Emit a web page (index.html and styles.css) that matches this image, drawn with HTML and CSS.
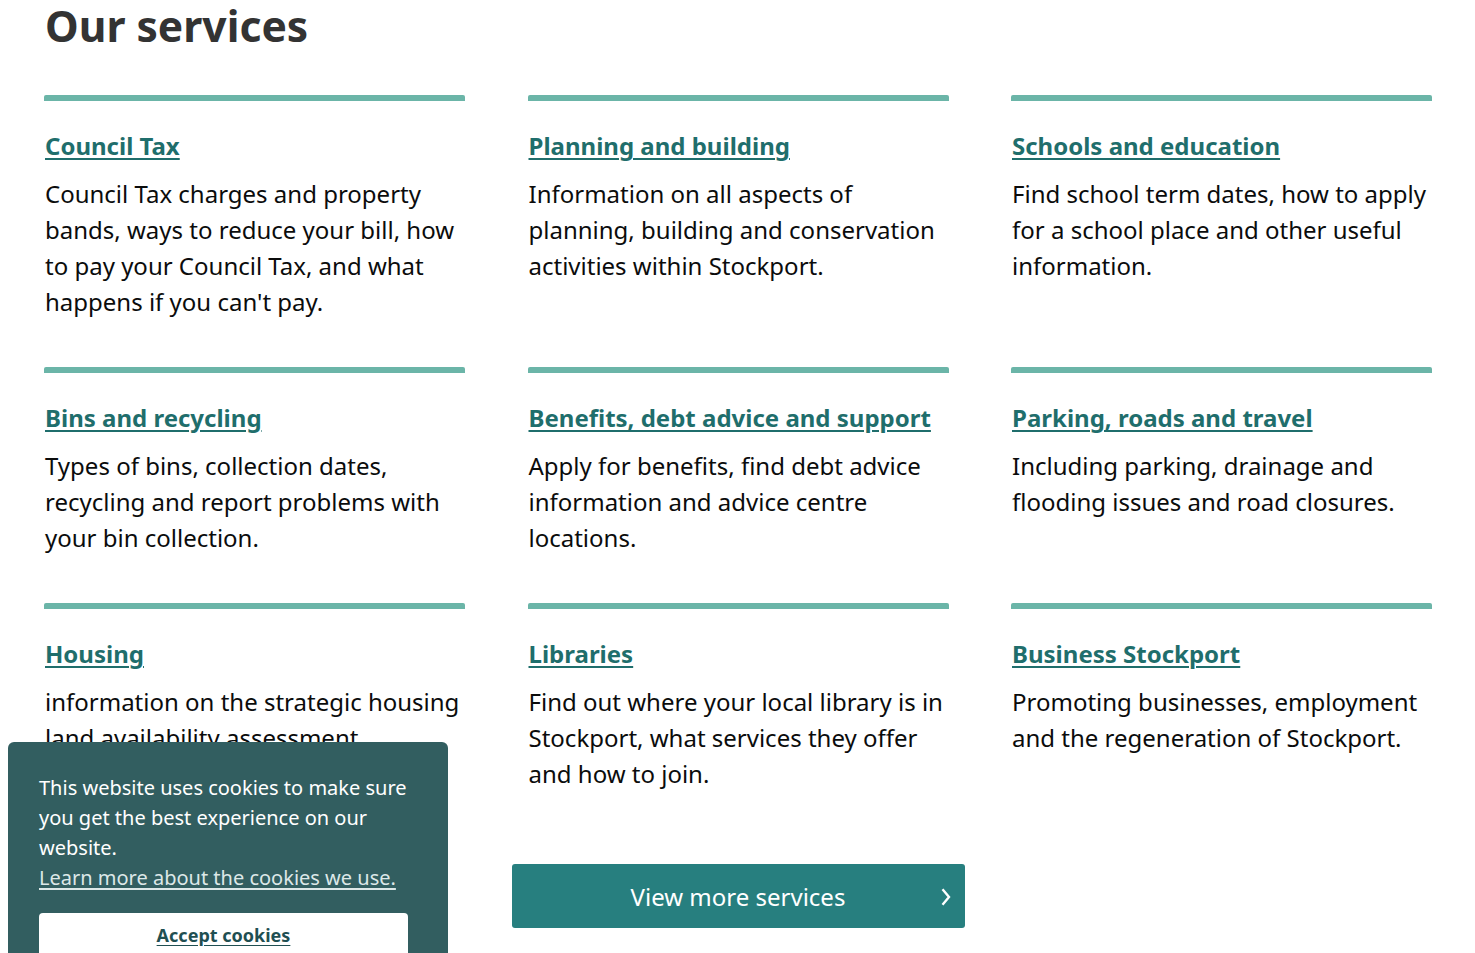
FILE: index.html
```html
<!DOCTYPE html>
<html lang="en">
<head>
<meta charset="utf-8">
<title>Our services</title>
<link rel="stylesheet" href="styles.css">
</head>
<body>
<main class="page">
  <h1 class="title">Our services</h1>
  <div class="services">
    <div class="card">
      <a class="card-link" href="#">Council Tax</a>
      <p class="card-text">Council Tax charges and property bands, ways to reduce your bill, how to pay your Council Tax, and what happens if you can't pay.</p>
    </div>
    <div class="card">
      <a class="card-link" href="#">Planning and building</a>
      <p class="card-text">Information on all aspects of planning, building and conservation activities within Stockport.</p>
    </div>
    <div class="card">
      <a class="card-link" href="#">Schools and education</a>
      <p class="card-text">Find school term dates, how to apply for a school place and other useful information.</p>
    </div>
    <div class="card">
      <a class="card-link" href="#">Bins and recycling</a>
      <p class="card-text">Types of bins, collection dates, recycling and report problems with your bin collection.</p>
    </div>
    <div class="card">
      <a class="card-link" href="#">Benefits, debt advice and support</a>
      <p class="card-text">Apply for benefits, find debt advice information and advice centre locations.</p>
    </div>
    <div class="card">
      <a class="card-link" href="#">Parking, roads and travel</a>
      <p class="card-text">Including parking, drainage and flooding issues and road closures.</p>
    </div>
    <div class="card">
      <a class="card-link" href="#">Housing</a>
      <p class="card-text">information on the strategic housing land availability assessment</p>
    </div>
    <div class="card">
      <a class="card-link" href="#">Libraries</a>
      <p class="card-text">Find out where your local library is in Stockport, what services they offer and how to join.</p>
    </div>
    <div class="card">
      <a class="card-link" href="#">Business Stockport</a>
      <p class="card-text">Promoting businesses, employment and the regeneration of Stockport.</p>
    </div>
  </div>
  <div class="more-row">
    <a class="more-btn" href="#">
      <span class="more-label">View more services</span>
      <svg class="more-chevron" width="10" height="18" viewBox="0 0 10 18" aria-hidden="true"><path d="M1.5 1.2 L8 9 L1.5 16.8" fill="none" stroke="#ffffff" stroke-width="2.4"/></svg>
    </a>
  </div>
</main>
<div class="cookie">
  <p class="cookie-text">This website uses cookies to make sure you get the best experience on our website.</p>
  <a class="cookie-link" href="#">Learn more about the cookies we use.</a>
  <button class="cookie-btn" type="button">Accept cookies</button>
</div>
</body>
</html>
```

FILE: styles.css
```css
html, body {
  margin: 0;
  padding: 0;
  background: #ffffff;
}

body {
  font-family: "Noto Sans", "Open Sans", sans-serif;
  color: #0b0c0c;
}

.page {
  width: 1388px;
  padding-left: 44px;
}

.title {
  margin: -3px 0 0 1px;
  font-size: 42.6px;
  line-height: 56px;
  font-weight: 700;
  color: #333333;
}

.services {
  margin-top: 42px;
  display: grid;
  grid-template-columns: repeat(3, 1fr);
  column-gap: 62.5px;
}

.card {
  border-top: 6px solid #6bb5a8;
  border-radius: 2px 2px 0 0;
  padding: 27px 0 47px 1px;
}

.card-link {
  display: inline-block;
  font-size: 24px;
  line-height: 36px;
  font-weight: 700;
  color: #1f6e6c;
  text-decoration: underline;
  text-decoration-thickness: 2px;
  text-underline-offset: 3px;
}

.card-text {
  margin: 12px 0 0;
  font-size: 24px;
  line-height: 36px;
}

.more-row {
  display: grid;
  grid-template-columns: repeat(3, 1fr);
  column-gap: 62.5px;
  margin-top: 25px;
}

.more-btn {
  grid-column: 2;
  margin: 0 -16px;
  height: 64px;
  display: flex;
  align-items: center;
  justify-content: center;
  position: relative;
  background: #277f7f;
  border-radius: 3px;
  color: #ffffff;
  text-decoration: none;
  font-size: 24px;
}

.more-chevron {
  position: absolute;
  right: 14px;
  top: 24px;
}

.cookie {
  position: fixed;
  left: 8px;
  bottom: 0;
  width: 369px;
  height: 180px;
  padding: 31px 40px 0 31px;
  background: #325e60;
  border-radius: 6px 6px 0 0;
  color: #ffffff;
  font-size: 20px;
  line-height: 30px;
}

.cookie-text {
  margin: 0;
}

.cookie-link {
  color: #dde8e8;
  text-decoration: underline;
  text-underline-offset: 3px;
}

.cookie-btn {
  display: block;
  margin-top: 20px;
  width: 369px;
  height: 50px;
  border: 0;
  border-radius: 4px;
  background: #ffffff;
  color: #1f4f52;
  font-family: "Noto Sans", "Open Sans", sans-serif;
  font-size: 18px;
  font-weight: 700;
  text-decoration: underline;
  text-underline-offset: 3px;
  padding: 9px 0 15px;
  text-align: center;
  vertical-align: top;
}
```
